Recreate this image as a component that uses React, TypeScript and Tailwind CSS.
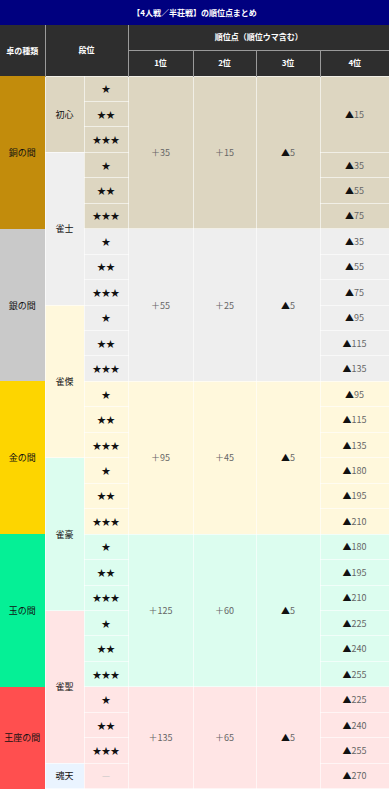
const rooms = [
  { name: "銅の間", color: "bg-[#c28c0c]", bg: "bg-[#ddd6c1]", start: 0, span: 6, p1: "＋35", p2: "＋15" },
  { name: "銀の間", color: "bg-[#c9c9c9]", bg: "bg-[#eeeeee]", start: 6, span: 6, p1: "＋55", p2: "＋25" },
  { name: "金の間", color: "bg-[#fdd500]", bg: "bg-[#fff8dc]", start: 12, span: 6, p1: "＋95", p2: "＋45" },
  { name: "玉の間", color: "bg-[#05f096]", bg: "bg-[#dcfdef]", start: 18, span: 6, p1: "＋125", p2: "＋60" },
  { name: "王座の間", color: "bg-[#ff4f4f]", bg: "bg-[#ffe5e5]", start: 24, span: 4, p1: "＋135", p2: "＋65" },
];

const tiers = [
  { name: "初心", bg: "bg-[#ddd6c1]", start: 0, span: 3 },
  { name: "雀士", bg: "bg-[#efefef]", start: 3, span: 6 },
  { name: "雀傑", bg: "bg-[#fff8dc]", start: 9, span: 6 },
  { name: "雀豪", bg: "bg-[#dcfdef]", start: 15, span: 6 },
  { name: "雀聖", bg: "bg-[#ffe5e5]", start: 21, span: 6 },
  { name: "魂天", bg: "bg-[#eaf4ff]", start: 27, span: 1 },
];

const fourth = [15, 0, 0, 35, 55, 75, 35, 55, 75, 95, 115, 135, 95, 115, 135, 180, 195, 210, 180, 195, 210, 225, 240, 255, 225, 240, 255, 270];

const cell = "border border-white/60 text-center align-middle p-0";

function Minus({ v }: { v: string | number }) {
  return (
    <span className="text-[#666]">
      <span className="text-[#111]">▲</span>
      {v}
    </span>
  );
}

export default function App() {
  const rows = Array.from({ length: 28 }, (_, i) => i);
  return (
    <div className="w-[389px] h-[789px] overflow-hidden bg-white" style={{ fontFamily: '"Noto Sans CJK JP", "Noto Sans", sans-serif' }}>
      <table className="w-[389px] table-fixed border-collapse text-[9px] leading-none">
        <colgroup>
          <col className="w-[45px]" />
          <col className="w-[39px]" />
          <col className="w-[44px]" />
          <col className="w-[65px]" />
          <col className="w-[63px]" />
          <col className="w-[64px]" />
          <col className="w-[69px]" />
        </colgroup>
        <thead className="text-[8px]">
          <tr className="h-[25px]">
            <th colSpan={7} className="bg-[#00007f] text-white font-bold text-center p-0">【4人戦／半荘戦】の順位点まとめ</th>
          </tr>
          <tr className="h-[25px] bg-[#2e2e2e] text-white font-bold">
            <th rowSpan={2} className="p-0 border-r border-[#9a9a9a]">卓の種類</th>
            <th rowSpan={2} colSpan={2} className="p-0 border-r border-[#9a9a9a]">段位</th>
            <th colSpan={4} className="p-0 border-b border-[#9a9a9a]">順位点（順位ウマ含む）</th>
          </tr>
          <tr className="h-[26px] bg-[#2e2e2e] text-white font-bold">
            <th className="p-0 border-r border-[#9a9a9a]">1位</th>
            <th className="p-0 border-r border-[#9a9a9a]">2位</th>
            <th className="p-0 border-r border-[#9a9a9a]">3位</th>
            <th className="p-0">4位</th>
          </tr>
        </thead>
        <tbody>
          {rows.map((i) => {
            const room = rooms.find((r) => r.start === i);
            const cur = rooms.find((r) => i >= r.start && i < r.start + r.span)!;
            const tier = tiers.find((t) => t.start === i);
            return (
              <tr key={i} className="h-[25.46px]">
                {room && (
                  <td rowSpan={room.span} className={`${room.color} text-center align-middle p-0 text-[#111]`}>
                    {room.name}
                  </td>
                )}
                {tier && (
                  <td rowSpan={tier.span} className={`${cell} ${tier.bg} text-[#111]`}>
                    {tier.name}
                  </td>
                )}
                <td className={`${cell} ${cur.bg} text-[#111]`}>
                  {i === 27 ? <span className="text-[#c8c8c8]">—</span> : "★".repeat((i % 3) + 1)}
                </td>
                {room && (
                  <>
                    <td rowSpan={room.span} className={`${cell} ${room.bg} text-[#666]`}>{room.p1}</td>
                    <td rowSpan={room.span} className={`${cell} ${room.bg} text-[#666]`}>{room.p2}</td>
                    <td rowSpan={room.span} className={`${cell} ${room.bg}`}><Minus v={5} /></td>
                  </>
                )}
                {i === 0 && (
                  <td rowSpan={3} className={`${cell} ${cur.bg}`}><Minus v={15} /></td>
                )}
                {i > 2 && (
                  <td className={`${cell} ${cur.bg}`}><Minus v={fourth[i]} /></td>
                )}
              </tr>
            );
          })}
        </tbody>
      </table>
    </div>
  );
}
